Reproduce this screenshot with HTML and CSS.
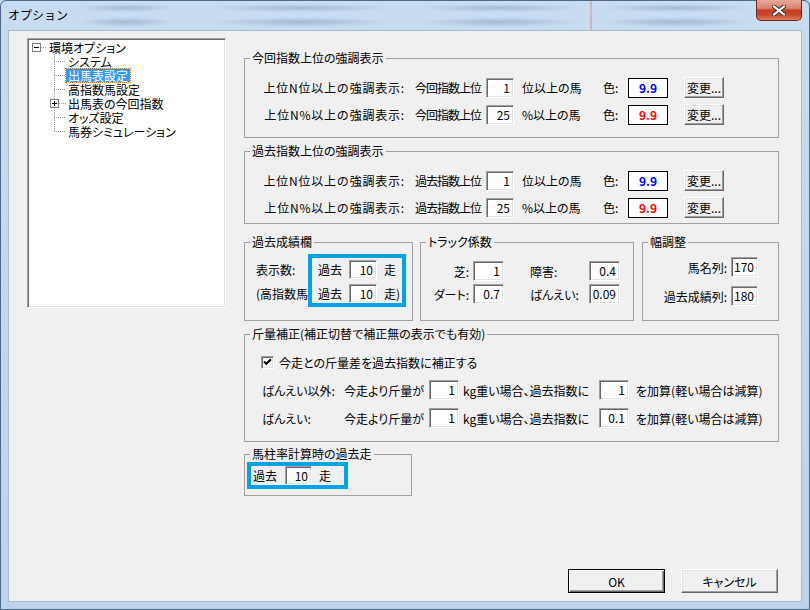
FILE: index.html
```html
<!DOCTYPE html>
<html lang="ja">
<head>
    <meta charset="UTF-8">
    <title>オプション</title>
    <link rel="stylesheet" href="styles.css">
</head>
<body>
<div class="window">
    <div class="titlebar">
        <span class="title">オプション</span>
        <div class="close-btn">
            <svg width="14" height="11" viewBox="0 0 14 11">
                <path d="M2 1.5 L12 9.5 M12 1.5 L2 9.5" stroke="#4a3a3a" stroke-width="4.4" stroke-linecap="round"/>
                <path d="M2 1.5 L12 9.5 M12 1.5 L2 9.5" stroke="#fff" stroke-width="2.2" stroke-linecap="round"/>
            </svg>
        </div>
    </div>

    <div class="client">
        <div class="main">
            <!-- tree -->
            <div class="tree">
                <div class="node root">
                    <svg class="expander" width="9" height="9" viewBox="0 0 9 9"><rect x="0.5" y="0.5" width="8" height="8" fill="#fff" stroke="#808080"/><path d="M2 4.5H7" stroke="#000"/></svg>
                    <span class="twig"></span>
                    <span class="label">環境オプション</span>
                </div>
                <div class="children">
                    <div class="node child"><span class="twig"></span><span class="label">システム</span></div>
                    <div class="node child"><span class="twig"></span><span class="label selected">出馬表設定</span></div>
                    <div class="node child"><span class="twig"></span><span class="label">高指数馬設定</span></div>
                    <div class="node child">
                        <svg class="expander" width="9" height="9" viewBox="0 0 9 9"><rect x="0.5" y="0.5" width="8" height="8" fill="#fff" stroke="#808080"/><path d="M2 4.5H7M4.5 2V7" stroke="#000"/></svg>
                        <span class="twig short"></span><span class="label">出馬表の今回指数</span>
                    </div>
                    <div class="node child"><span class="twig"></span><span class="label">オッズ設定</span></div>
                    <div class="node child last"><span class="twig"></span><span class="label">馬券シミュレーション</span></div>
                </div>
            </div>

            <!-- settings -->
            <div class="panel">
                <fieldset class="group wide g1">
                    <legend>今回指数上位の強調表示</legend>
                    <div class="hl-rows">
                        <div class="hl-row">
                            <span class="hl-label">上位N位以上の強調表示:</span>
                            <span class="hl-text">今回指数上位</span>
                            <span class="edit">1</span>
                            <span class="hl-unit">位以上の馬</span>
                            <span class="hl-color">色:</span>
                            <span class="swatch blue">9.9</span>
                            <span class="btn small">変更...</span>
                        </div>
                        <div class="hl-row">
                            <span class="hl-label">上位N%以上の強調表示:</span>
                            <span class="hl-text">今回指数上位</span>
                            <span class="edit">25</span>
                            <span class="hl-unit">%以上の馬</span>
                            <span class="hl-color">色:</span>
                            <span class="swatch red">9.9</span>
                            <span class="btn small">変更...</span>
                        </div>
                    </div>
                </fieldset>

                <fieldset class="group wide g2">
                    <legend>過去指数上位の強調表示</legend>
                    <div class="hl-rows">
                        <div class="hl-row">
                            <span class="hl-label">上位N位以上の強調表示:</span>
                            <span class="hl-text">過去指数上位</span>
                            <span class="edit">1</span>
                            <span class="hl-unit">位以上の馬</span>
                            <span class="hl-color">色:</span>
                            <span class="swatch blue">9.9</span>
                            <span class="btn small">変更...</span>
                        </div>
                        <div class="hl-row">
                            <span class="hl-label">上位N%以上の強調表示:</span>
                            <span class="hl-text">過去指数上位</span>
                            <span class="edit">25</span>
                            <span class="hl-unit">%以上の馬</span>
                            <span class="hl-color">色:</span>
                            <span class="swatch red">9.9</span>
                            <span class="btn small">変更...</span>
                        </div>
                    </div>
                </fieldset>

                <div class="group-row">
                    <fieldset class="group past">
                        <legend>過去成績欄</legend>
                        <div class="past-body">
                            <div class="past-labels">
                                <span>表示数:</span>
                                <span>(高指数馬</span>
                            </div>
                            <div class="mark">
                                <div class="mark-row"><span class="mark-text">過去</span><span class="edit">10</span><span class="mark-unit">走</span></div>
                                <div class="mark-row"><span class="mark-text">過去</span><span class="edit">10</span><span class="mark-unit">走)</span></div>
                            </div>
                        </div>
                    </fieldset>

                    <fieldset class="group track">
                        <legend>トラック係数</legend>
                        <div class="track-grid">
                            <span class="tr-label">芝:</span><span class="edit">1</span>
                            <span class="tr-label2">障害:</span><span class="edit">0.4</span>
                            <span class="tr-label">ダート:</span><span class="edit">0.7</span>
                            <span class="tr-label2">ばんえい:</span><span class="edit">0.09</span>
                        </div>
                    </fieldset>

                    <fieldset class="group width">
                        <legend>幅調整</legend>
                        <div class="width-rows">
                            <div class="width-row"><span class="w-label">馬名列:</span><span class="edit">170</span></div>
                            <div class="width-row"><span class="w-label">過去成績列:</span><span class="edit">180</span></div>
                        </div>
                    </fieldset>
                </div>

                <fieldset class="group wide weight">
                    <legend>斤量補正(補正切替で補正無の表示でも有効)</legend>
                    <div class="check-row">
                        <span class="checkbox"><svg width="9" height="9" viewBox="0 0 9 9"><path d="M1 3.5 L3.3 5.8 L8 1.2" stroke="#000" stroke-width="2" fill="none"/></svg></span>
                        <span>今走との斤量差を過去指数に補正する</span>
                    </div>
                    <div class="wt-rows">
                        <div class="wt-row">
                            <span class="wt-label">ばんえい以外:</span>
                            <span class="wt-text">今走より斤量が</span>
                            <span class="edit">1</span>
                            <span class="wt-mid">kg重い場合、過去指数に</span>
                            <span class="edit">1</span>
                            <span class="wt-tail">を加算(軽い場合は減算)</span>
                        </div>
                        <div class="wt-row">
                            <span class="wt-label">ばんえい:</span>
                            <span class="wt-text">今走より斤量が</span>
                            <span class="edit">1</span>
                            <span class="wt-mid">kg重い場合、過去指数に</span>
                            <span class="edit">0.1</span>
                            <span class="wt-tail">を加算(軽い場合は減算)</span>
                        </div>
                    </div>
                </fieldset>

                <fieldset class="group umabashira">
                    <legend>馬柱率計算時の過去走</legend>
                    <div class="mark small-mark">
                        <div class="mark-row"><span class="mark-text">過去</span><span class="edit">10</span><span class="mark-unit">走</span></div>
                    </div>
                </fieldset>
            </div>
        </div>

        <div class="footer">
            <span class="btn default">OK</span>
            <span class="btn">キャンセル</span>
        </div>
    </div>
</div>
</body>
</html>
```

FILE: styles.css
```css
* {
    box-sizing: border-box;
}

body {
    margin: 0;
    width: 810px;
    height: 610px;
    overflow: hidden;
    font-family: "Noto Sans CJK JP", "Noto Sans", sans-serif;
    font-size: 12px;
    font-feature-settings: "palt";
    color: #000;
    background: #c4d8ee;
}

/* window frame */
.window {
    width: 810px;
    height: 610px;
    border: 1px solid #4f6a86;
    border-radius: 6px 6px 0 0;
    padding: 0 7px 7px;
    display: flex;
    flex-direction: column;
    background: linear-gradient(to bottom, #c8dcf1, #bdd3eb);
}

.titlebar {
    height: 29px;
    flex: none;
    margin: 0 -7px;
    padding: 0 7px;
    display: flex;
    align-items: flex-start;
    background:
        linear-gradient(to right, transparent 589px, rgba(220, 140, 150, 0.5) 589px, rgba(220, 140, 150, 0.5) 591px, transparent 591px),
        radial-gradient(ellipse 48px 4px at 125px 7px, rgba(95, 125, 165, 0.35), transparent),
        radial-gradient(ellipse 48px 5px at 125px 21px, rgba(95, 125, 165, 0.35), transparent),
        radial-gradient(ellipse 92px 4px at 300px 7px, rgba(95, 125, 165, 0.35), transparent),
        radial-gradient(ellipse 92px 5px at 300px 21px, rgba(95, 125, 165, 0.35), transparent),
        radial-gradient(ellipse 80px 4px at 498px 7px, rgba(95, 125, 165, 0.35), transparent),
        radial-gradient(ellipse 80px 5px at 498px 21px, rgba(95, 125, 165, 0.35), transparent),
        radial-gradient(ellipse 75px 4px at 675px 7px, rgba(95, 125, 165, 0.35), transparent),
        radial-gradient(ellipse 75px 5px at 675px 21px, rgba(95, 125, 165, 0.35), transparent);
}

.title {
    margin-top: 8px;
    line-height: 12px;
    font-size: 12px;
    font-feature-settings: normal;
}

.close-btn {
    margin-left: auto;
    margin-top: -1px;
    width: 46px;
    height: 21px;
    border: 1px solid #6e2a1e;
    border-top: none;
    border-radius: 0 0 5px 5px;
    background: linear-gradient(to bottom, #e8a898 0%, #d98670 40%, #c43c22 52%, #c9482e 75%, #dd7a5e 100%);
    display: flex;
    align-items: center;
    justify-content: center;
}

.client {
    height: 572px;
    flex: none;
    background: #f0f0f0;
    border: 1px solid #a7b9cc;
    display: flex;
    flex-direction: column;
}

.main {
    display: flex;
    align-items: flex-start;
    padding: 7px 0 0 18px;
}

/* tree view */
.tree {
    width: 199px;
    height: 270px;
    flex: none;
    background: #fff;
    border: 1px solid;
    border-color: #a0a0a0 #fff #fff #a0a0a0;
    box-shadow: inset 1px 1px 0 #696969, inset -1px -1px 0 #e3e3e3;
    padding: 1px;
    font-size: 12px;
}

.node {
    height: 14px;
    display: flex;
    align-items: center;
}

.expander {
    flex: none;
    display: block;
}

.root .expander {
    margin-left: 3px;
}

.twig {
    height: 1px;
    flex: none;
    background: repeating-linear-gradient(to right, #a0a0a0 0 1px, transparent 1px 2px);
}

.root .twig {
    width: 6px;
}

.children {
    margin-left: 25px;
}

.child {
    background: repeating-linear-gradient(to bottom, #a0a0a0 0 1px, transparent 1px 2px) 0 0 / 1px 100% no-repeat;
}

.child.last {
    background-size: 1px 8px;
}

.child .twig {
    width: 12px;
}

.child .expander {
    margin-left: -4px;
}

.child .twig.short {
    width: 7px;
}

.label {
    padding: 0 2px;
    line-height: 13px;
    white-space: nowrap;
}

.label.selected {
    background: #3399ff;
    color: #fff;
    outline: 1px dotted #e07a00;
}

/* right side */
.panel {
    margin-left: 18px;
    padding-top: 13px;
    display: flex;
    flex-direction: column;
}

.group {
    margin: 0;
    padding: 0;
    min-width: 0;
    border: 1px solid #a0a0a0;
}

.group legend {
    padding: 0 2px;
    margin-left: 5px;
    font-size: 12px;
    line-height: 14px;
}

.wide {
    width: 535px;
}

.g1 {
    height: 87px;
}

.g2 {
    height: 80px;
    margin-top: 6px;
}

/* shared controls */
.edit {
    display: flex;
    align-items: center;
    justify-content: flex-end;
    flex: none;
    width: 28px;
    height: 20px;
    padding-right: 3px;
    background: #fff;
    border: 1px solid;
    border-color: #a0a0a0 #fff #fff #a0a0a0;
    box-shadow: inset 1px 1px 0 #696969, inset -1px -1px 0 #e3e3e3;
    font-size: 12px;
    line-height: 12px;
}

.btn {
    display: flex;
    align-items: center;
    justify-content: center;
    flex: none;
    width: 97px;
    height: 24px;
    background: #f0f0f0;
    border: 1px solid;
    border-color: #fff #696969 #696969 #fff;
    box-shadow: inset -1px -1px 0 #a0a0a0, inset 1px 1px 0 #e3e3e3;
    font-size: 12px;
}

.btn.small {
    width: 40px;
    height: 21px;
    margin-left: 16px;
}

.btn.default {
    border-color: #000;
    box-shadow: inset 1px 1px 0 #fff, inset -1px -1px 0 #696969, inset -2px -2px 0 #a0a0a0;
}

.swatch {
    display: flex;
    align-items: center;
    justify-content: center;
    flex: none;
    width: 40px;
    height: 20px;
    background: #fff;
    border: 1px solid #000;
    font-weight: bold;
    font-size: 12px;
}

.swatch.blue {
    color: #0000ff;
}

.swatch.red {
    color: #ff0000;
}

/* highlight groups */
.hl-rows {
    display: flex;
    flex-direction: column;
    gap: 6px;
    padding-top: 12px;
}

.hl-row {
    display: flex;
    align-items: center;
    height: 21px;
    white-space: nowrap;
}

.hl-label {
    width: 160px;
    text-align: right;
    letter-spacing: 0.8px;
    font-feature-settings: normal;
}

.hl-text {
    width: 71px;
    margin-left: 10px;
    letter-spacing: -1px;
}

.hl-unit {
    width: 81px;
    margin-left: 8px;
}

.hl-color {
    width: 25px;
}

/* third row of groups */
.group-row {
    display: flex;
    margin-top: 11px;
}

.group-row .group {
    height: 86px;
}

.past {
    width: 169px;
}

.past-body {
    display: flex;
    padding-top: 5px;
}

.past-labels {
    width: 52px;
    margin-left: 11px;
    padding-top: 6px;
    display: flex;
    flex-direction: column;
    gap: 5px;
    overflow: hidden;
    white-space: nowrap;
}

.past-labels span {
    height: 19px;
    line-height: 19px;
}

.mark {
    border: 4px solid #00a2e8;
    width: 98px;
    padding: 2px 0 0 6px;
    display: flex;
    flex-direction: column;
    gap: 5px;
}

.mark-row {
    display: flex;
    align-items: center;
    height: 19px;
}

.mark .edit {
    height: 19px;
}

.mark-text {
    width: 31px;
}

.mark-unit {
    margin-left: 7px;
}

.track {
    width: 214px;
    margin-left: 7px;
}

.track-grid {
    display: grid;
    grid-template-columns: 52px 31px 85px 31px;
    grid-auto-rows: 20px;
    row-gap: 3px;
    align-items: center;
    padding-top: 12px;
}

.track-grid .edit {
    width: 31px;
}

.tr-label {
    text-align: right;
    padding-right: 4px;
    white-space: nowrap;
}

.tr-label2 {
    padding-left: 26px;
    white-space: nowrap;
}

.width {
    width: 137px;
    margin-left: 8px;
}

.width-rows {
    display: flex;
    flex-direction: column;
    gap: 9px;
    padding-top: 8px;
}

.width-row {
    display: flex;
    align-items: center;
    height: 20px;
}

.w-label {
    width: 88px;
    padding-right: 4px;
    text-align: right;
    white-space: nowrap;
}

.width-row .edit {
    width: 27px;
}

/* weight correction */
.weight {
    height: 115px;
    margin-top: 6px;
}

.check-row {
    display: flex;
    align-items: center;
    height: 16px;
    margin-top: 13px;
    padding-left: 16px;
    gap: 5px;
}

.checkbox {
    width: 13px;
    height: 13px;
    flex: none;
    display: flex;
    align-items: center;
    justify-content: center;
    background: #fff;
    border: 1px solid;
    border-color: #a0a0a0 #fff #fff #a0a0a0;
    box-shadow: inset 1px 1px 0 #696969, inset -1px -1px 0 #e3e3e3;
}

.checkbox svg {
    display: block;
}

.wt-rows {
    display: flex;
    flex-direction: column;
    gap: 8px;
    margin-top: 10px;
}

.wt-row {
    display: flex;
    align-items: center;
    height: 20px;
    padding-left: 17px;
    white-space: nowrap;
}

.wt-label {
    width: 82px;
}

.wt-text {
    width: 85px;
}

.wt-row .edit {
    width: 30px;
}

.wt-mid {
    width: 136px;
    margin-left: 4px;
}

.wt-tail {
    margin-left: 7px;
}

/* umabashira */
.umabashira {
    width: 168px;
    height: 49px;
    margin-top: 5px;
}

.small-mark {
    width: 101px;
    margin: 1px 0 0 2px;
    padding: 0 0 0 2px;
}

.small-mark .mark-text {
    width: 32px;
}

.small-mark .edit {
    width: 27px;
}

.footer {
    margin-top: auto;
    display: flex;
    justify-content: flex-end;
    gap: 16px;
    padding: 0 23px 8px 0;
}
```
